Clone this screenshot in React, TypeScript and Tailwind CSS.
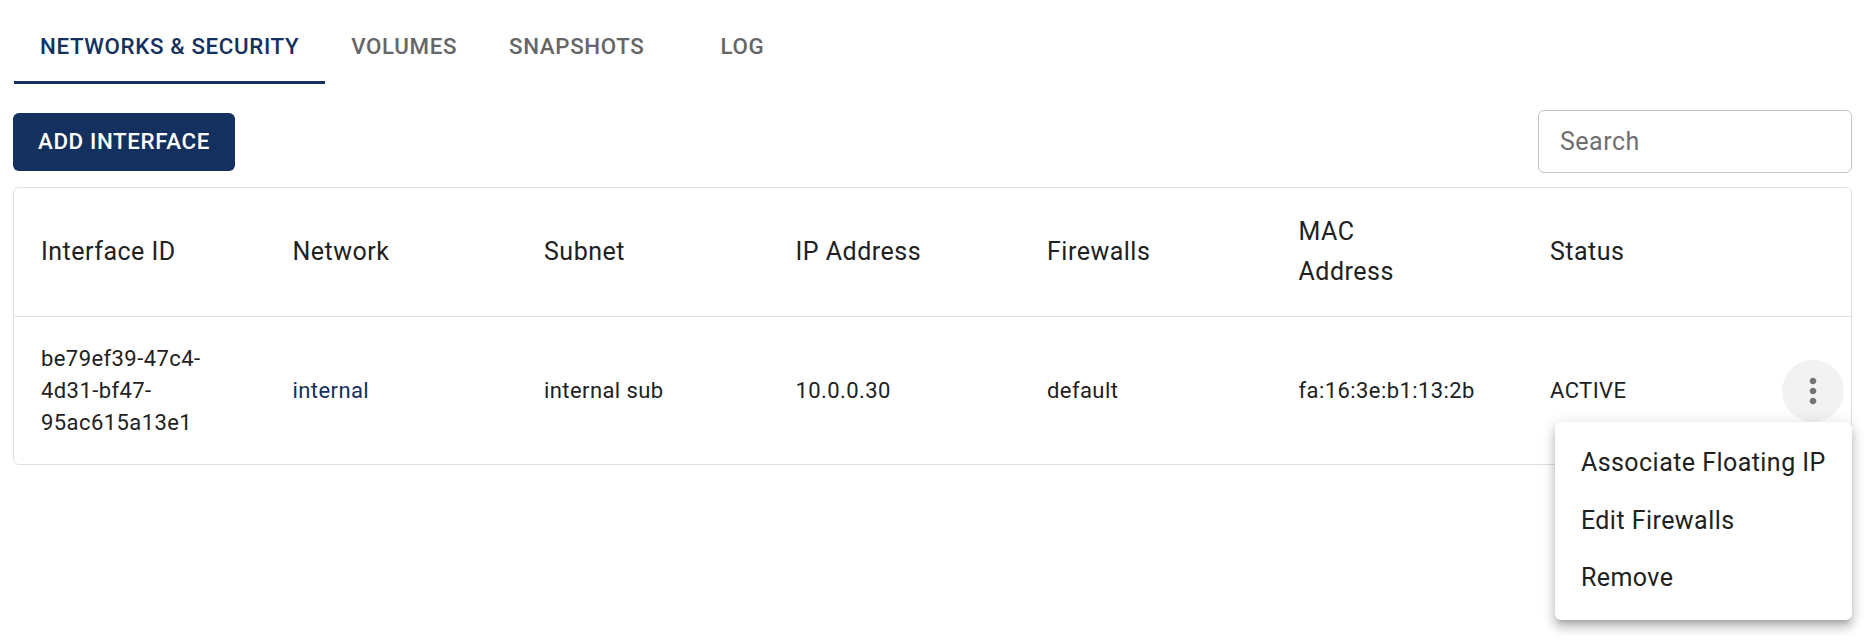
import React from 'react';

const NAVY = '#13305e';

interface InterfaceRow {
  id: string;
  network: string;
  subnet: string;
  ip: string;
  firewalls: string;
  mac: string;
  status: string;
}

const rows: InterfaceRow[] = [
  {
    id: 'be79ef39-47c4-4d31-bf47-95ac615a13e1',
    network: 'internal',
    subnet: 'internal sub',
    ip: '10.0.0.30',
    firewalls: 'default',
    mac: 'fa:16:3e:b1:13:2b',
    status: 'ACTIVE',
  },
];

const tabs = ['Networks & Security', 'Volumes', 'Snapshots', 'Log'];

const MoreVertIcon: React.FC = () => (
  <svg className="w-[40px] h-[40px] text-[#737373]" viewBox="0 0 24 24" fill="currentColor" xmlns="http://www.w3.org/2000/svg">
    <path d="M12 8c1.1 0 2-.9 2-2s-.9-2-2-2-2 .9-2 2 .9 2 2 2zm0 2c-1.1 0-2 .9-2 2s.9 2 2 2 2-.9 2-2-.9-2-2-2zm0 6c-1.1 0-2 .9-2 2s.9 2 2 2 2-.9 2-2-.9-2-2-2z" />
  </svg>
);

const RowMenu: React.FC = () => (
  <div className="absolute top-full right-[-8px] z-10 bg-white rounded-[6px] py-[13px] whitespace-nowrap shadow-[0px_5px_5px_-3px_rgba(0,0,0,0.2),0px_8px_10px_1px_rgba(0,0,0,0.14),0px_3px_14px_2px_rgba(0,0,0,0.12)]">
    {['Associate Floating IP', 'Edit Firewalls', 'Remove'].map((item) => (
      <div key={item} className="h-[57.5px] px-[26px] flex items-center text-[25px] text-[#212121] tracking-[0.45px]">
        {item}
      </div>
    ))}
  </div>
);

export default function App() {
  return (
    <div className="w-full min-h-[644px] bg-white pl-[13px] pr-[18px] font-['Roboto','Liberation_Sans',sans-serif] text-[#212121]">
      {/* tabs */}
      <div className="flex pl-[1px] pt-[12px]">
        {tabs.map((tab, i) => (
          <div
            key={tab}
            className={`h-[72px] min-w-[144px] px-[26px] flex items-center justify-center border-b-[3px] text-[22.3px] font-medium uppercase tracking-[0.64px] ${
              i === 0 ? 'border-[#13305e] text-[#13305e]' : 'border-transparent text-[#666666]'
            }`}
          >
            {tab}
          </div>
        ))}
      </div>

      {/* toolbar */}
      <div className="mt-[26px] h-[63px] flex items-center justify-between">
        <button
          className="h-[58px] px-[25px] rounded-[6px] text-white text-[22.3px] font-medium uppercase tracking-[0.64px]"
          style={{ backgroundColor: NAVY }}
        >
          Add Interface
        </button>
        <input
          placeholder="Search"
          className="w-[314px] h-[63px] border border-[#c4c4c4] rounded-[6px] px-[21px] text-[25px] tracking-[0.5px] outline-none placeholder:text-[#6f6f6f]"
        />
      </div>

      {/* table */}
      <div className="mt-[14px] border border-[#e0e0e0] rounded-[6px]">
        <div className="grid grid-cols-[repeat(7,251.5px)_1fr] items-center border-b border-[#e0e0e0] py-[24px] text-[25px] leading-[40px] tracking-[0.5px]">
          <div className="pl-[27px]">Interface ID</div>
          <div className="pl-[27px]">Network</div>
          <div className="pl-[27px]">Subnet</div>
          <div className="pl-[27px]">IP Address</div>
          <div className="pl-[27px]">Firewalls</div>
          <div className="pl-[27px]">
            <span className="block w-[130px]">MAC Address</span>
          </div>
          <div className="pl-[27px]">Status</div>
          <div />
        </div>
        {rows.map((row) => (
          <div key={row.id} className="grid grid-cols-[repeat(7,251.5px)_1fr] items-center h-[147px] text-[22px] leading-[32px] tracking-[0.42px]">
            <div className="pl-[27px]">
              <span className="block max-w-[190px]">{row.id}</span>
            </div>
            <div className="pl-[27px]" style={{ color: NAVY }}>{row.network}</div>
            <div className="pl-[27px]">{row.subnet}</div>
            <div className="pl-[27px]">{row.ip}</div>
            <div className="pl-[27px]">{row.firewalls}</div>
            <div className="pl-[27px]">{row.mac}</div>
            <div className="pl-[27px]">{row.status}</div>
            <div className="flex justify-center">
              <div className="relative">
                <button className="w-[62px] h-[62px] rounded-full bg-[#f2f2f2] flex items-center justify-center">
                  <MoreVertIcon />
                </button>
                <RowMenu />
              </div>
            </div>
          </div>
        ))}
      </div>
    </div>
  );
}
